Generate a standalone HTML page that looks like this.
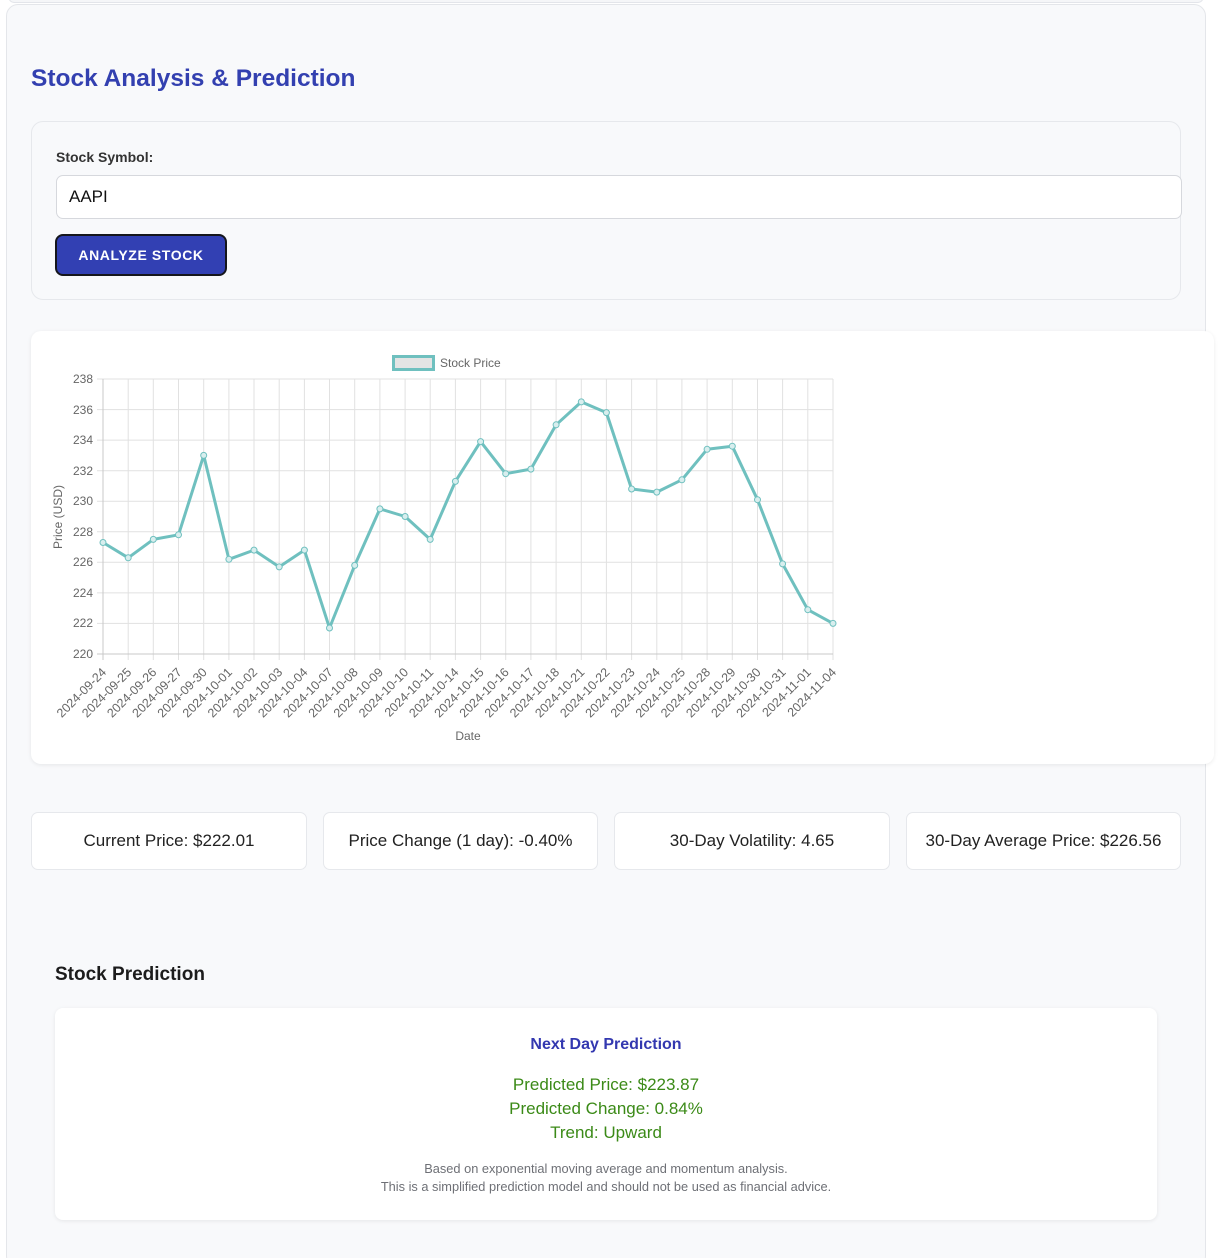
<!DOCTYPE html>
<html style="overflow:hidden;height:1258px"><head><meta charset="utf-8"><style>
*{box-sizing:border-box;margin:0;padding:0}
body{width:1219px;height:1258px;background:#fff;font-family:"Liberation Sans",sans-serif;position:relative;overflow:hidden}
.topbar{position:absolute;left:8px;top:-10px;width:1196px;height:13px;border:1px solid #e3e5ea;border-radius:10px;background:#f5f6f8}
.outer{position:absolute;left:6px;top:4px;width:1200px;height:1264px;background:#f8f9fb;border:1px solid #e4e6ea;border-radius:12px}
.title{position:absolute;left:31px;top:65px;font-size:24.5px;font-weight:bold;color:#3340b0}
.form{position:absolute;left:31px;top:121px;width:1150px;height:179px;border:1px solid #e6e8ec;border-radius:12px;background:#f8f9fb}
.lbl{position:absolute;left:56px;top:149px;font-size:14px;font-weight:bold;color:#333}
.inp{position:absolute;left:56px;top:175px;width:1126px;height:44px;border:1px solid #d6d8dd;border-radius:7px;background:#fff;font-size:17px;color:#111;padding:11px 12px}
.btn{position:absolute;left:55px;top:234px;width:172px;height:42px;background:#3240b3;border:2px solid #15161c;border-radius:8px;color:#fff;font-weight:bold;font-size:14px;letter-spacing:.6px;text-align:center;line-height:38px}
.chart{position:absolute;left:31px;top:331px;width:1183px;height:433px;background:#fff;border-radius:10px;box-shadow:0 1px 4px rgba(0,0,0,.08)}
.stat{position:absolute;top:812px;height:58px;background:#fff;border:1px solid #e6e8ec;border-radius:7px;font-size:17px;color:#222;text-align:center;line-height:56px}
.h2{position:absolute;left:55px;top:964px;font-size:19px;font-weight:bold;color:#1c1c1c}
.pred{position:absolute;left:55px;top:1008px;width:1102px;height:212px;background:#fff;border-radius:8px;box-shadow:0 1px 4px rgba(0,0,0,.08);text-align:center}
.pred .h{position:absolute;top:28px;width:100%;font-size:16px;font-weight:bold;color:#3338b0}
.pred .g{position:absolute;width:100%;font-size:17px;color:#3b8a17}
.pred .s{position:absolute;width:100%;font-size:12.8px;color:#6e7076}
svg{position:absolute;left:0;top:0}
</style></head><body>
<div class="topbar"></div>
<div class="outer"></div>
<div class="title">Stock Analysis &amp; Prediction</div>
<div class="form"></div>
<div class="lbl">Stock Symbol:</div>
<div class="inp">AAPI</div>
<div class="btn">ANALYZE STOCK</div>
<div class="chart"></div>
<svg width="1219" height="1258" font-family="Liberation Sans, sans-serif">
<g stroke="#e1e1e1" stroke-width="1">
<line x1="97" y1="379" x2="833" y2="379"/><line x1="97" y1="409.6" x2="833" y2="409.6"/><line x1="97" y1="440.1" x2="833" y2="440.1"/><line x1="97" y1="470.7" x2="833" y2="470.7"/><line x1="97" y1="501.2" x2="833" y2="501.2"/><line x1="97" y1="531.8" x2="833" y2="531.8"/><line x1="97" y1="562.3" x2="833" y2="562.3"/><line x1="97" y1="592.9" x2="833" y2="592.9"/><line x1="97" y1="623.4" x2="833" y2="623.4"/>
<line x1="128.2" y1="379" x2="128.2" y2="660"/><line x1="153.3" y1="379" x2="153.3" y2="660"/><line x1="178.5" y1="379" x2="178.5" y2="660"/><line x1="203.7" y1="379" x2="203.7" y2="660"/><line x1="228.9" y1="379" x2="228.9" y2="660"/><line x1="254" y1="379" x2="254" y2="660"/><line x1="279.2" y1="379" x2="279.2" y2="660"/><line x1="304.4" y1="379" x2="304.4" y2="660"/><line x1="329.5" y1="379" x2="329.5" y2="660"/><line x1="354.7" y1="379" x2="354.7" y2="660"/><line x1="379.9" y1="379" x2="379.9" y2="660"/><line x1="405.1" y1="379" x2="405.1" y2="660"/><line x1="430.2" y1="379" x2="430.2" y2="660"/><line x1="455.4" y1="379" x2="455.4" y2="660"/><line x1="480.6" y1="379" x2="480.6" y2="660"/><line x1="505.7" y1="379" x2="505.7" y2="660"/><line x1="530.9" y1="379" x2="530.9" y2="660"/><line x1="556.1" y1="379" x2="556.1" y2="660"/><line x1="581.3" y1="379" x2="581.3" y2="660"/><line x1="606.4" y1="379" x2="606.4" y2="660"/><line x1="631.6" y1="379" x2="631.6" y2="660"/><line x1="656.8" y1="379" x2="656.8" y2="660"/><line x1="681.9" y1="379" x2="681.9" y2="660"/><line x1="707.1" y1="379" x2="707.1" y2="660"/><line x1="732.3" y1="379" x2="732.3" y2="660"/><line x1="757.5" y1="379" x2="757.5" y2="660"/><line x1="782.6" y1="379" x2="782.6" y2="660"/><line x1="807.8" y1="379" x2="807.8" y2="660"/><line x1="833" y1="379" x2="833" y2="660"/>
</g>
<g stroke="#c8c8c8"><line x1="97" y1="654" x2="833" y2="654"/><line x1="103" y1="379" x2="103" y2="660"/></g>
<g font-size="12" fill="#666" text-anchor="end">
<text x="93" y="383">238</text><text x="93" y="414">236</text><text x="93" y="444">234</text><text x="93" y="475">232</text><text x="93" y="505">230</text><text x="93" y="536">228</text><text x="93" y="566">226</text><text x="93" y="597">224</text><text x="93" y="627">222</text><text x="93" y="658">220</text>
</g>
<text transform="translate(62 517) rotate(-90)" font-size="12" fill="#666" text-anchor="middle">Price (USD)</text>
<text x="468" y="740" font-size="12" fill="#666" text-anchor="middle">Date</text>
<rect x="393.5" y="356.5" width="40" height="13" fill="#e4e4e4" stroke="#6fc0bf" stroke-width="3"/>
<text x="440" y="367" font-size="12" fill="#666">Stock Price</text>
<g font-size="12.5" fill="#666" text-anchor="end">
<text transform="translate(107 673) rotate(-45)">2024-09-24</text>
<text transform="translate(132.2 673) rotate(-45)">2024-09-25</text>
<text transform="translate(157.3 673) rotate(-45)">2024-09-26</text>
<text transform="translate(182.5 673) rotate(-45)">2024-09-27</text>
<text transform="translate(207.7 673) rotate(-45)">2024-09-30</text>
<text transform="translate(232.9 673) rotate(-45)">2024-10-01</text>
<text transform="translate(258 673) rotate(-45)">2024-10-02</text>
<text transform="translate(283.2 673) rotate(-45)">2024-10-03</text>
<text transform="translate(308.4 673) rotate(-45)">2024-10-04</text>
<text transform="translate(333.5 673) rotate(-45)">2024-10-07</text>
<text transform="translate(358.7 673) rotate(-45)">2024-10-08</text>
<text transform="translate(383.9 673) rotate(-45)">2024-10-09</text>
<text transform="translate(409.1 673) rotate(-45)">2024-10-10</text>
<text transform="translate(434.2 673) rotate(-45)">2024-10-11</text>
<text transform="translate(459.4 673) rotate(-45)">2024-10-14</text>
<text transform="translate(484.6 673) rotate(-45)">2024-10-15</text>
<text transform="translate(509.7 673) rotate(-45)">2024-10-16</text>
<text transform="translate(534.9 673) rotate(-45)">2024-10-17</text>
<text transform="translate(560.1 673) rotate(-45)">2024-10-18</text>
<text transform="translate(585.3 673) rotate(-45)">2024-10-21</text>
<text transform="translate(610.4 673) rotate(-45)">2024-10-22</text>
<text transform="translate(635.6 673) rotate(-45)">2024-10-23</text>
<text transform="translate(660.8 673) rotate(-45)">2024-10-24</text>
<text transform="translate(685.9 673) rotate(-45)">2024-10-25</text>
<text transform="translate(711.1 673) rotate(-45)">2024-10-28</text>
<text transform="translate(736.3 673) rotate(-45)">2024-10-29</text>
<text transform="translate(761.5 673) rotate(-45)">2024-10-30</text>
<text transform="translate(786.6 673) rotate(-45)">2024-10-31</text>
<text transform="translate(811.8 673) rotate(-45)">2024-11-01</text>
<text transform="translate(837 673) rotate(-45)">2024-11-04</text>
</g>
<polyline fill="none" stroke="#6fc0bf" stroke-width="3" stroke-linejoin="round" points="103,542.5 128.2,557.8 153.3,539.4 178.5,534.8 203.7,455.4 228.9,559.3 254,550.1 279.2,566.9 304.4,550.1 329.5,628 354.7,565.4 379.9,508.9 405.1,516.5 430.2,539.4 455.4,481.4 480.6,441.6 505.7,473.7 530.9,469.1 556.1,424.8 581.3,401.9 606.4,412.6 631.6,489 656.8,492.1 681.9,479.8 707.1,449.3 732.3,446.2 757.5,499.7 782.6,563.9 807.8,609.7 833,623.4"/>
<g fill="#d8eeee" stroke="#6fc0bf" stroke-width="1">
<circle cx="103" cy="542.5" r="3"/><circle cx="128.2" cy="557.8" r="3"/><circle cx="153.3" cy="539.4" r="3"/><circle cx="178.5" cy="534.8" r="3"/><circle cx="203.7" cy="455.4" r="3"/><circle cx="228.9" cy="559.3" r="3"/><circle cx="254" cy="550.1" r="3"/><circle cx="279.2" cy="566.9" r="3"/><circle cx="304.4" cy="550.1" r="3"/><circle cx="329.5" cy="628" r="3"/><circle cx="354.7" cy="565.4" r="3"/><circle cx="379.9" cy="508.9" r="3"/><circle cx="405.1" cy="516.5" r="3"/><circle cx="430.2" cy="539.4" r="3"/><circle cx="455.4" cy="481.4" r="3"/><circle cx="480.6" cy="441.6" r="3"/><circle cx="505.7" cy="473.7" r="3"/><circle cx="530.9" cy="469.1" r="3"/><circle cx="556.1" cy="424.8" r="3"/><circle cx="581.3" cy="401.9" r="3"/><circle cx="606.4" cy="412.6" r="3"/><circle cx="631.6" cy="489" r="3"/><circle cx="656.8" cy="492.1" r="3"/><circle cx="681.9" cy="479.8" r="3"/><circle cx="707.1" cy="449.3" r="3"/><circle cx="732.3" cy="446.2" r="3"/><circle cx="757.5" cy="499.7" r="3"/><circle cx="782.6" cy="563.9" r="3"/><circle cx="807.8" cy="609.7" r="3"/><circle cx="833" cy="623.4" r="3"/>
</g>
</svg>
<div class="stat" style="left:31px;width:276px">Current Price: $222.01</div>
<div class="stat" style="left:323px;width:275px">Price Change (1 day): -0.40%</div>
<div class="stat" style="left:614px;width:276px">30-Day Volatility: 4.65</div>
<div class="stat" style="left:906px;width:275px">30-Day Average Price: $226.56</div>
<div class="h2">Stock Prediction</div>
<div class="pred">
<div class="h">Next Day Prediction</div>
<div class="g" style="top:67px">Predicted Price: $223.87</div>
<div class="g" style="top:91px">Predicted Change: 0.84%</div>
<div class="g" style="top:115px">Trend: Upward</div>
<div class="s" style="top:153px">Based on exponential moving average and momentum analysis.</div>
<div class="s" style="top:171px">This is a simplified prediction model and should not be used as financial advice.</div>
</div>
</body></html>
